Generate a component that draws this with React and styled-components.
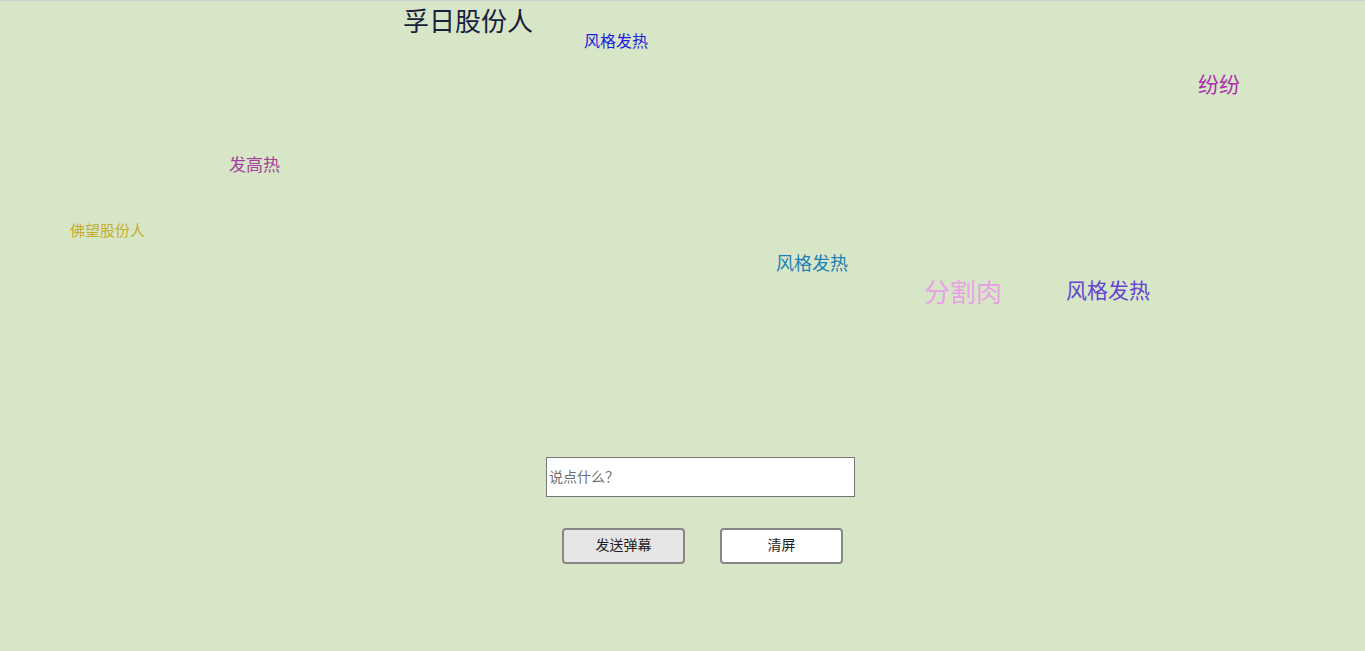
import styled, { createGlobalStyle } from "styled-components";

const GlobalStyle = createGlobalStyle`
  html, body {
    margin: 0;
    padding: 0;
    background-color: #d8e6c8;
  }
  body {
    font-family: "Noto Sans CJK SC", "Liberation Sans", sans-serif;
  }
`;

const Page = styled.div`
  min-height: 650px;
  border-top: 1px solid #cfcfcf;
  background-color: #d8e6c8;
  display: flex;
  flex-direction: column;
`;

const Screen = styled.div`
  position: relative;
  height: 456px;
  overflow: hidden;
`;

const Bullet = styled.span`
  position: absolute;
  white-space: nowrap;
  line-height: 1;
  font-size: ${(p) => p.size}px;
  color: ${(p) => p.color};
`;

const Controls = styled.div`
  display: flex;
  flex-direction: column;
  margin-left: calc(50% - 136.5px);
  width: 309px;
`;

const Input = styled.input`
  box-sizing: border-box;
  width: 309px;
  height: 40px;
  padding: 0 2px 2px;
  border: 1px solid #767676;
  background: #fff;
  font-family: "Noto Sans CJK SC", "Liberation Sans", sans-serif;
  font-size: 14px;
  outline: none;

  &::placeholder {
    color: #6f6f6f;
    font-family: "Noto Sans CJK SC", sans-serif;
  }
`;

const ButtonRow = styled.div`
  display: flex;
  gap: 35px;
  margin-top: 31px;
  padding-left: 16px;
`;

const Button = styled.button`
  box-sizing: border-box;
  width: 123px;
  height: 36px;
  padding: 0 0 5px;
  line-height: 1;
  border: 2px solid #878787;
  border-radius: 4px;
  background-color: ${(p) => (p.primary ? "#e6e6e6" : "#ffffff")};
  color: #1e1e1e;
  font-family: "Noto Sans CJK SC", "Liberation Sans", sans-serif;
  font-size: 14px;
  cursor: pointer;
`;

const bullets = [
  { text: "孚日股份人", x: 403, y: 6, size: 26, color: "#17213d" },
  { text: "风格发热", x: 584, y: 31, size: 16, color: "#1d1ddf" },
  { text: "纷纷", x: 1198, y: 72, size: 21, color: "#ad30ad" },
  { text: "发高热", x: 229, y: 154, size: 17, color: "#a3409c" },
  { text: "佛望股份人", x: 70, y: 221, size: 15, color: "#c6ad2c" },
  { text: "风格发热", x: 776, y: 252, size: 18, color: "#2180b3" },
  { text: "分割肉", x: 924, y: 277, size: 26, color: "#e9a2e6" },
  { text: "风格发热", x: 1066, y: 278, size: 21, color: "#6344d2" },
];

const App = () => {
  return (
    <>
      <GlobalStyle />
      <Page>
        <Screen>
          {bullets.map((b, i) => (
            <Bullet key={i} size={b.size} color={b.color} style={{ left: b.x, top: b.y }}>
              {b.text}
            </Bullet>
          ))}
        </Screen>
        <Controls>
          <Input placeholder="说点什么？" />
          <ButtonRow>
            <Button primary>发送弹幕</Button>
            <Button>清屏</Button>
          </ButtonRow>
        </Controls>
      </Page>
    </>
  );
};

export default App;
